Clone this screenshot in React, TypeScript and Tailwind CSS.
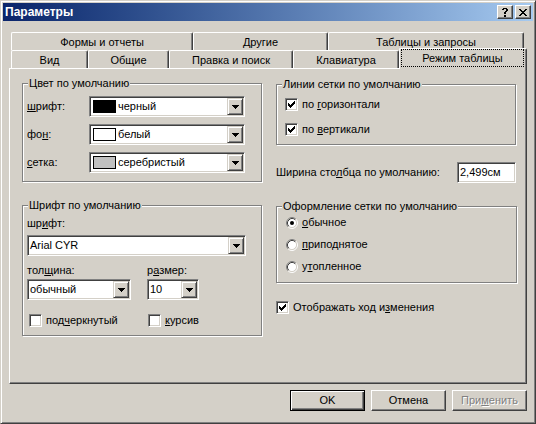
import React from "react";

const sunken =
  "border border-t-[#808080] border-l-[#808080] border-r-white border-b-white shadow-[inset_1px_1px_#404040,inset_-1px_-1px_#d4d0c8]";

function Arrow() {
  return (
    <svg width="7" height="4" viewBox="0 0 7 4" shapeRendering="crispEdges">
      <path d="M0 0h7v1h-7zM1 1h5v1h-5zM2 2h3v1h-3zM3 3h1v1h-1z" fill="#000" />
    </svg>
  );
}

function Combo({ className, children }: { className: string; children: React.ReactNode }) {
  return (
    <div className={`flex h-[21px] shrink-0 bg-white p-[1px] ${sunken} ${className}`}>
      <div className="flex min-w-0 flex-1 items-center pl-[1px] leading-[13px]">{children}</div>
      <div className="flex h-[17px] w-[16px] shrink-0 items-center justify-center border border-t-[#d4d0c8] border-l-[#d4d0c8] border-r-[#404040] border-b-[#404040] bg-[#d4d0c8] shadow-[inset_1px_1px_#fff,inset_-1px_-1px_#808080]">
        <Arrow />
      </div>
    </div>
  );
}

function Check({ checked }: { checked: boolean }) {
  return (
    <div className={`flex h-[13px] w-[13px] shrink-0 items-center justify-center bg-white ${sunken}`}>
      {checked && (
        <svg width="7" height="7" viewBox="0 0 7 7" shapeRendering="crispEdges">
          <path
            d="M6 0h1v1h-1zM5 1h2v1h-2zM0 2h1v1h-1zM4 2h3v1h-3zM0 3h2v1h-2zM3 3h3v1h-3zM0 4h5v1h-5zM1 5h3v1h-3zM2 6h1v1h-1z"
            fill="#000"
          />
        </svg>
      )}
    </div>
  );
}

function Radio({ checked }: { checked: boolean }) {
  return (
    <svg width="12" height="12" viewBox="0 0 12 12" className="shrink-0">
      <circle cx="6" cy="6" r="4.5" fill="#fff" />
      <path d="M2.11 9.89A5.5 5.5 0 0 1 9.89 2.11" stroke="#808080" fill="none" />
      <path d="M9.89 2.11A5.5 5.5 0 0 1 2.11 9.89" stroke="#fff" fill="none" />
      <path d="M2.82 9.18A4.5 4.5 0 0 1 9.18 2.82" stroke="#404040" fill="none" />
      <path d="M9.18 2.82A4.5 4.5 0 0 1 2.82 9.18" stroke="#d4d0c8" fill="none" />
      {checked && <circle cx="6" cy="6" r="2" fill="#000" />}
    </svg>
  );
}

function Group({
  title,
  className,
  children,
}: {
  title: string;
  className: string;
  children: React.ReactNode;
}) {
  return (
    <div
      className={`flex flex-col border border-[#808080] shadow-[inset_1px_1px_#fff,1px_1px_#fff] ${className}`}
    >
      <span className="-mt-[7px] ml-[5px] self-start bg-[#d4d0c8] px-[1px] leading-[13px]">{title}</span>
      {children}
    </div>
  );
}

function Tab({ w, children }: { w: string; children: React.ReactNode }) {
  return (
    <div
      className={`flex h-[18px] shrink-0 justify-center rounded-t-[2px] border-l border-t border-r border-l-white border-t-white border-r-[#404040] pt-[3px] leading-[13px] shadow-[inset_-1px_0_#808080] ${w}`}
    >
      {children}
    </div>
  );
}

function Button({
  children,
  def,
  disabled,
}: {
  children: React.ReactNode;
  def?: boolean;
  disabled?: boolean;
}) {
  const frame = def
    ? "border border-black shadow-[inset_1px_1px_#fff,inset_-1px_-1px_#404040,inset_-2px_-2px_#808080]"
    : "border border-t-white border-l-white border-r-[#404040] border-b-[#404040] shadow-[inset_-1px_-1px_#808080]";
  return (
    <div
      className={`flex h-[21px] w-[75px] items-center justify-center leading-[13px] ${frame} ${
        disabled ? "text-[#808080] [text-shadow:1px_1px_0_#fff]" : ""
      }`}
    >
      {children}
    </div>
  );
}

function CapBtn({ children }: { children: React.ReactNode }) {
  return (
    <div className="flex h-[14px] w-[16px] items-center justify-center border border-t-white border-l-white border-r-[#404040] border-b-[#404040] bg-[#d4d0c8] shadow-[inset_-1px_-1px_#808080]">
      {children}
    </div>
  );
}

export default function App() {
  return (
    <div className="flex h-[424px] w-[536px] flex-col overflow-hidden border border-t-[#d4d0c8] border-l-[#d4d0c8] border-r-[#404040] border-b-[#404040] bg-[#d4d0c8] p-[2px] font-['Liberation_Sans',Arial,sans-serif] text-[11px] leading-[13px] text-black shadow-[inset_1px_1px_#fff,inset_-1px_-1px_#808080]">
      {/* Title bar */}
      <div className="flex h-[18px] shrink-0 items-center justify-between bg-linear-to-r from-[#0a246a] to-[#a6caf0] pl-[2px] pr-[2px]">
        <span className="text-[12px] font-bold leading-[14px] text-white">Параметры</span>
        <div className="flex gap-[2px]">
          <CapBtn>
            <svg width="6" height="9" viewBox="0 0 6 9" shapeRendering="crispEdges">
              <path
                d="M1 0h4v1h-4zM0 1h2v1h-2zM4 1h2v1h-2zM4 2h2v1h-2zM3 3h2v1h-2zM2 4h2v1h-2zM2 5h2v1h-2zM2 7h2v2h-2z"
                fill="#000"
              />
            </svg>
          </CapBtn>
          <CapBtn>
            <svg width="8" height="7" viewBox="0 0 8 7" shapeRendering="crispEdges">
              <path
                d="M0 0h2v1h-2zM6 0h2v1h-2zM1 1h2v1h-2zM5 1h2v1h-2zM2 2h4v1h-4zM3 3h2v1h-2zM2 4h4v1h-4zM1 5h2v1h-2zM5 5h2v1h-2zM0 6h2v1h-2zM6 6h2v1h-2z"
                fill="#000"
              />
            </svg>
          </CapBtn>
        </div>
      </div>

      {/* Tabs + panel */}
      <div className="flex flex-col px-[6px] pt-[11px]">
        <div className="flex pl-[2px]">
          <Tab w="w-[182px]">Формы и отчеты</Tab>
          <Tab w="w-[135px]">Другие</Tab>
          <Tab w="w-[196px]">Таблицы и запросы</Tab>
        </div>
        <div className="flex h-[18px] items-end pl-[2px]">
          <Tab w="w-[77px]">Вид</Tab>
          <Tab w="w-[81px]">Общие</Tab>
          <Tab w="w-[124px]">Правка и поиск</Tab>
          <Tab w="w-[106px]">Клавиатура</Tab>
          <div className="relative z-10 -mb-[1px] flex h-[21px] w-[128px] shrink-0 flex-col rounded-t-[2px] border-l border-t border-r border-l-white border-t-white border-r-[#404040] bg-[#d4d0c8] shadow-[inset_-1px_0_#808080]">
            <div className="ml-[1px] mr-[2px] flex h-[18px] justify-center border border-dotted border-black pt-[2px] leading-[13px]">
              Режим таблицы
            </div>
          </div>
        </div>

        <div className="flex h-[316px] items-start gap-[14px] border border-t-white border-l-white border-r-[#404040] border-b-[#404040] pl-[12px] pt-[14px] shadow-[inset_-1px_-1px_#808080]">
          {/* Left column */}
          <div className="flex w-[240px] flex-col">
            <Group title="Цвет по умолчанию" className="h-[99px]">
              <div className="mt-[6px] flex flex-col gap-[7px] pl-[4px]">
                <div className="flex items-center">
                  <span className="w-[62px]">
                    <u>ш</u>рифт:
                  </span>
                  <Combo className="w-[156px]">
                    <span className="ml-[1px] h-[13px] w-[23px] shrink-0 border border-black bg-black" />
                    <span className="ml-[2px]">черный</span>
                  </Combo>
                </div>
                <div className="flex items-center">
                  <span className="w-[62px]">
                    фо<u>н</u>:
                  </span>
                  <Combo className="w-[156px]">
                    <span className="ml-[1px] h-[13px] w-[23px] shrink-0 border border-black bg-white" />
                    <span className="ml-[2px]">белый</span>
                  </Combo>
                </div>
                <div className="flex items-center">
                  <span className="w-[62px]">
                    <u>с</u>етка:
                  </span>
                  <Combo className="w-[156px]">
                    <span className="ml-[1px] h-[13px] w-[23px] shrink-0 border border-black bg-[#c0c0c0]" />
                    <span className="ml-[2px]">серебристый</span>
                  </Combo>
                </div>
              </div>
            </Group>

            <Group title="Шрифт по умолчанию" className="mt-[23px] h-[131px]">
              <div className="flex flex-col pl-[4px]">
                <span className="mt-[5px]">
                  шр<u>и</u>фт:
                </span>
                <Combo className="mt-[5px] w-[219px]">
                  <span>Arial CYR</span>
                </Combo>
                <div className="mt-[8px] flex">
                  <span className="w-[120px]">
                    тол<u>щ</u>ина:
                  </span>
                  <span>
                    р<u>а</u>змер:
                  </span>
                </div>
                <div className="mt-[2px] flex">
                  <div className="w-[120px]">
                    <Combo className="w-[104px]">
                      <span>обычный</span>
                    </Combo>
                  </div>
                  <Combo className="w-[52px]">
                    <span>10</span>
                  </Combo>
                </div>
                <div className="mt-[14px] flex items-center">
                  <div className="flex w-[121px] items-center gap-[4px] pl-[2px]">
                    <Check checked={false} />
                    <span>
                      под<u>ч</u>еркнутый
                    </span>
                  </div>
                  <div className="flex items-center gap-[4px]">
                    <Check checked={false} />
                    <span>
                      <u>к</u>урсив
                    </span>
                  </div>
                </div>
              </div>
            </Group>
          </div>

          {/* Right column */}
          <div className="flex w-[241px] flex-col pt-[1px]">
            <Group title="Линии сетки по умолчанию" className="h-[61px] w-[240px]">
              <div className="mt-[7px] flex flex-col gap-[12px] pl-[8px]">
                <div className="flex h-[13px] items-center gap-[4px]">
                  <Check checked />
                  <span>
                    по <u>г</u>оризонтали
                  </span>
                </div>
                <div className="flex h-[13px] items-center gap-[4px]">
                  <Check checked />
                  <span>
                    по <u>в</u>ертикали
                  </span>
                </div>
              </div>
            </Group>

            <div className="mt-[17px] flex w-[240px] items-center justify-between">
              <span>
                Ширина сто<u>л</u>бца по умолчанию:
              </span>
              <div className={`flex h-[21px] w-[59px] items-center bg-white p-[1px] pl-[2px] ${sunken}`}>
                2,499см
              </div>
            </div>

            <Group title="Оформление сетки по умолчанию" className="mt-[23px] h-[77px] w-[241px]">
              <div className="mt-[3px] flex flex-col gap-[9px] pl-[9px]">
                <div className="flex h-[13px] items-center gap-[4px]">
                  <Radio checked />
                  <span>
                    <u>о</u>бычное
                  </span>
                </div>
                <div className="flex h-[13px] items-center gap-[4px]">
                  <Radio checked={false} />
                  <span>
                    <u>п</u>риподнятое
                  </span>
                </div>
                <div className="flex h-[13px] items-center gap-[4px]">
                  <Radio checked={false} />
                  <span>
                    у<u>т</u>опленное
                  </span>
                </div>
              </div>
            </Group>

            <div className="mt-[18px] flex h-[13px] items-center gap-[4px]">
              <Check checked />
              <span>
                Отображать ход и<u>з</u>менения
              </span>
            </div>
          </div>
        </div>
      </div>

      {/* Buttons */}
      <div className="mt-[6px] flex justify-end gap-[6px] pr-[6px]">
        <Button def>OK</Button>
        <Button>Отмена</Button>
        <Button disabled>
          При<u>м</u>енить
        </Button>
      </div>
    </div>
  );
}
